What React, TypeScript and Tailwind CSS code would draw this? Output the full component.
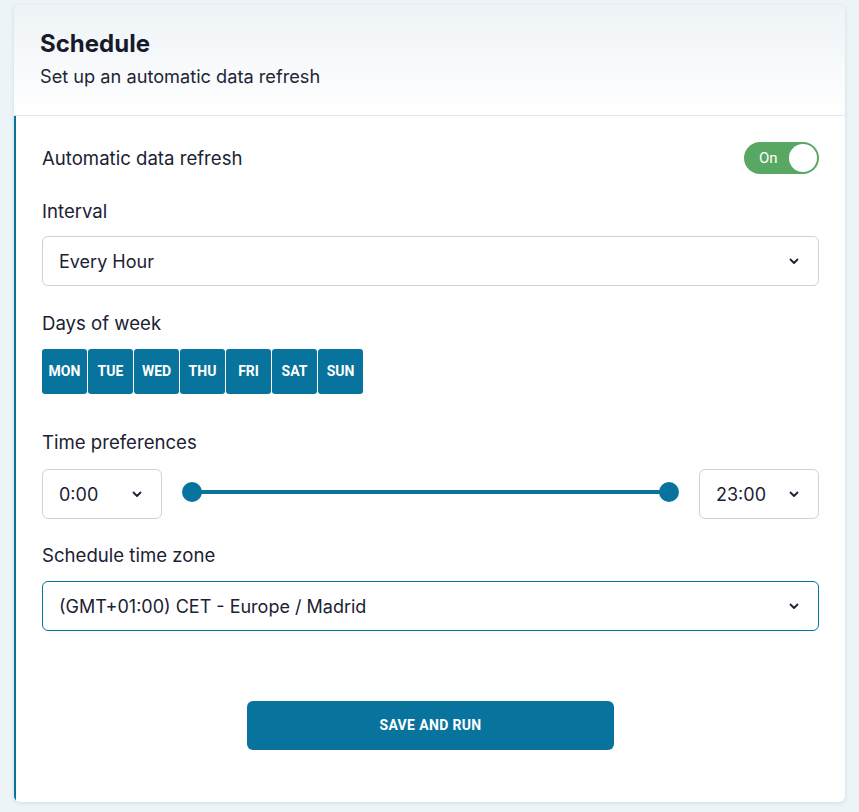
import React, { useState } from 'react';

const days = ['MON', 'TUE', 'WED', 'THU', 'FRI', 'SAT', 'SUN'];

const Chevron = () => (
  <svg width="12" height="12" viewBox="0 0 12 12" fill="none" className="text-[#1b2233]">
    <path d="M2.5 4.5 6 8l3.5-3.5" stroke="currentColor" strokeWidth="1.8" strokeLinecap="round" strokeLinejoin="round" />
  </svg>
);

const SelectBox = ({ value, active, className }: { value: string; active?: boolean; className?: string }) => (
  <div
    className={`flex h-[50px] items-center justify-between rounded-md border bg-white pl-4 pr-[18px] text-[18px] text-[#1b2233] ${
      active ? 'border-[#08739c]' : 'border-[#ccd3da]'
    } ${className ?? ''}`}
  >
    <span>{value}</span>
    <Chevron />
  </div>
);

const App = () => {
  const [enabled, setEnabled] = useState(true);
  const [selected] = useState(days);

  return (
    <div
      className="min-h-[812px] w-full bg-[#edf4f7] pt-[5px] px-[14px] pb-[10px]"
      style={{ fontFamily: 'Inter, Roboto, sans-serif' }}
    >
      <div className="overflow-hidden rounded-md bg-white shadow-[0_1px_4px_rgba(40,80,100,0.15)]">
        <div className="bg-gradient-to-b from-[#eef3f6] to-white px-[26px] pt-[25px] pb-[27px] border-b border-[#e4e7ea]">
          <h1 className="text-[24px] font-bold leading-7 text-[#161b2c]">Schedule</h1>
          <p className="mt-[6px] text-[18.2px] leading-6 text-[#1e2536]">Set up an automatic data refresh</p>
        </div>

        <div className="border-l-2 border-[#08739c] pl-[26px] pr-[26px] pt-[26px] pb-[52px]">
          <div className="flex items-center justify-between">
            <span className="text-[18.6px] leading-6 text-[#1b2233]">Automatic data refresh</span>
            <button
              onClick={() => setEnabled(!enabled)}
              className="flex h-8 w-[75px] items-center justify-between rounded-full bg-[#58a863] pl-[15px] pr-[2px]"
            >
              <span className="text-[15px] text-white" style={{ fontFamily: 'Roboto, sans-serif' }}>On</span>
              <span className="h-[28px] w-[28px] rounded-full bg-white" />
            </button>
          </div>

          <div className="mt-[25px] text-[18.6px] leading-6 text-[#1b2233]">Interval</div>
          <SelectBox value="Every Hour" className="mt-[13px]" />

          <div className="mt-[25px] text-[18.6px] leading-6 text-[#1b2233]">Days of week</div>
          <div className="mt-[14px] flex gap-px" style={{ fontFamily: 'Roboto, sans-serif' }}>
            {days.map((d) => (
              <div
                key={d}
                className={`flex h-[45px] w-[45px] items-center justify-center rounded-[3px] text-[14px] font-bold ${
                  selected.includes(d) ? 'bg-[#08739c] text-white' : 'bg-white text-[#08739c]'
                }`}
              >
                {d}
              </div>
            ))}
          </div>

          <div className="mt-[36px] text-[18.6px] leading-6 text-[#1b2233]">Time preferences</div>
          <div className="mt-[15px] flex items-center">
            <SelectBox value="0:00" className="w-[120px]" />
            <div className="flex flex-1 -translate-y-[2px] items-center px-[20px]">
              <span className="h-5 w-5 rounded-full bg-[#08739c]" />
              <span className="-mx-1 h-1 flex-1 bg-[#08739c]" />
              <span className="h-5 w-5 rounded-full bg-[#08739c]" />
            </div>
            <SelectBox value="23:00" className="w-[120px]" />
          </div>

          <div className="mt-[24px] text-[18.6px] leading-6 text-[#1b2233]">Schedule time zone</div>
          <SelectBox value="(GMT+01:00) CET - Europe / Madrid" active className="mt-[14px]" />

          <div className="mt-[70px] flex justify-center">
            <button
              className="h-[49px] w-[367px] rounded-md bg-[#08739c] text-[14px] font-bold tracking-wide text-white"
              style={{ fontFamily: 'Roboto, sans-serif' }}
            >
              SAVE AND RUN
            </button>
          </div>
        </div>
      </div>
    </div>
  );
};

export default App;
